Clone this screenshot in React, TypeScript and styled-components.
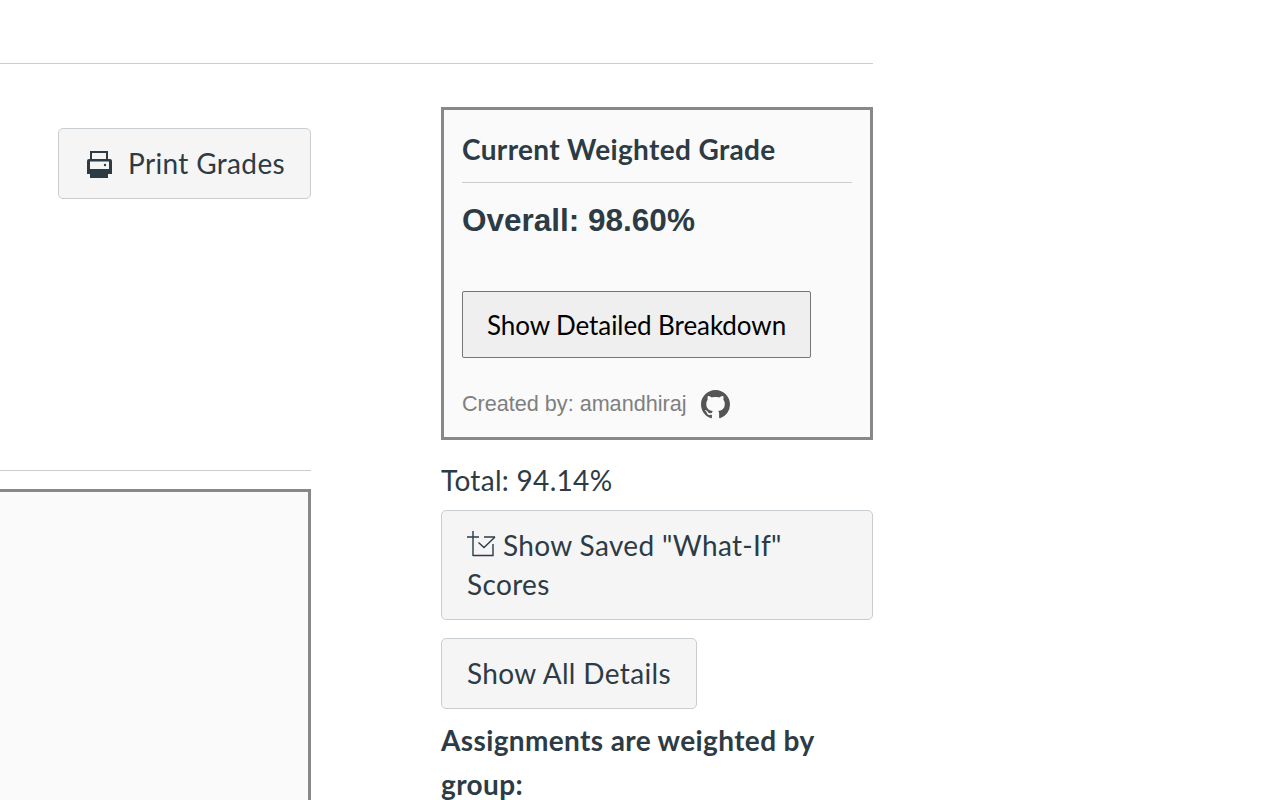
import React from 'react';
import styled, { createGlobalStyle } from 'styled-components';

const GlobalStyle = createGlobalStyle`
  html, body {
    margin: 0;
    padding: 0;
    height: 800px;
    overflow: hidden;
    background: #fff;
  }
  body {
    font-family: Lato, "Liberation Sans", sans-serif;
    color: #2d3b45;
  }
  * {
    box-sizing: border-box;
  }
`

const Page = styled.div`
  width: 873px;
`
const TopBar = styled.div`
  height: 64px;
  border-bottom: 1px solid #c7cdd1;
`
const Columns = styled.div`
  display: flex;
  gap: 130px;
`
const LeftColumn = styled.div`
  width: 311px;
  padding-top: 64px;
  display: flex;
  flex-direction: column;
  align-items: flex-end;
`
const RightColumn = styled.div`
  width: 432px;
  padding-top: 43px;
`
const Divider = styled.div`
  width: 100%;
  height: 1px;
  background: #c7cdd1;
  margin-top: 271px;
`
const EmptyPanel = styled.div`
  width: 100%;
  height: 400px;
  margin-top: 18px;
  background: #fafafa;
  border: 3px solid #888;
  border-left: none;
`
const CanvasButton = styled.div<{ $wide?: boolean }>`
  display: ${p => (p.$wide ? 'block' : 'inline-flex')};
  align-items: center;
  width: ${p => (p.$wide ? '100%' : 'auto')};
  padding: ${p => (p.$wide ? '15px 25px' : '0 25px')};
  min-height: 71px;
  background: #f5f5f5;
  border: 1px solid #c7cdd1;
  border-radius: 5px;
  font-size: 28px;
  line-height: 39px;
  letter-spacing: 0.35px;
  color: #2d3b45;
`
const PrintIcon = styled.svg`
  width: 28px;
  height: 28px;
  margin-right: 16px;
  flex-shrink: 0;
`
const WhatIfIcon = styled.svg`
  width: 30px;
  height: 28px;
  margin-right: 6px;
  vertical-align: -3px;
`
const GradeBox = styled.div`
  height: 333px;
  padding: 18px 18px 0;
  background: #fafafa;
  border: 3px solid #888;
`
const GradeTitle = styled.div`
  font-size: 28px;
  font-weight: 700;
  line-height: 42px;
  letter-spacing: 0.36px;
  padding-bottom: 12px;
  border-bottom: 1px solid #c7cdd1;
`
const OverallText = styled.div`
  margin-top: 16px;
  font-family: "Liberation Sans", Arial, sans-serif;
  font-size: 31.5px;
  font-weight: 700;
  line-height: 42px;
`
const BreakdownButton = styled.div`
  display: inline-flex;
  align-items: center;
  justify-content: center;
  margin-top: 50px;
  width: 349px;
  height: 67px;
  background: #efefef;
  border: 1px solid #767676;
  border-radius: 2px;
  font-size: 26px;
  letter-spacing: -0.08px;
  color: #000;
`
const CreditRow = styled.div`
  display: flex;
  align-items: center;
  margin-top: 30px;
  font-family: "Liberation Sans", Arial, sans-serif;
  font-size: 21.6px;
  color: #7f7f7f;
`
const GithubIcon = styled.svg`
  width: 29px;
  height: 29px;
  margin-left: 15px;
  margin-top: 2px;
  fill: #555;
`
const TotalText = styled.div`
  margin-top: 20px;
  margin-bottom: 10px;
  font-size: 28px;
  line-height: 40px;
  letter-spacing: 0.3px;
`
const DetailsSlot = styled.div`
  margin-top: 18px;
`
const WeightHeading = styled.div`
  margin-top: 9px;
  font-size: 28px;
  font-weight: 700;
  line-height: 44px;
  letter-spacing: 0.37px;
`

const App: React.FC = () => {
  return (
    <>
      <GlobalStyle />
      <Page>
        <TopBar />
        <Columns>
          <LeftColumn>
            <CanvasButton>
              <PrintIcon viewBox="0 0 28 28" fill="#2d3b45">
                <path fillRule="evenodd" d="M6 1h18v9h-2V3H8v7H6z" />
                <path fillRule="evenodd" d="M5 9h21a2 2 0 0 1 2 2v13H3V11a2 2 0 0 1 2-2zM6 11.5v7.5h19v-7.5z" />
                <rect x="6" y="20" width="18" height="8" />
                <circle cx="21" cy="15" r="1.2" />
              </PrintIcon>
              Print Grades
            </CanvasButton>
            <Divider />
            <EmptyPanel />
          </LeftColumn>
          <RightColumn>
            <GradeBox>
              <GradeTitle>Current Weighted Grade</GradeTitle>
              <OverallText>Overall: 98.60%</OverallText>
              <BreakdownButton>Show Detailed Breakdown</BreakdownButton>
              <CreditRow>
                Created by: amandhiraj
                <GithubIcon viewBox="0 0 16 16">
                  <path d="M8 0C3.58 0 0 3.58 0 8c0 3.54 2.29 6.53 5.47 7.59.4.07.55-.17.55-.38 0-.19-.01-.82-.01-1.49-2.01.37-2.53-.49-2.69-.94-.09-.23-.48-.94-.82-1.13-.28-.15-.68-.52-.01-.53.63-.01 1.08.58 1.23.82.72 1.21 1.87.87 2.33.66.07-.52.28-.87.51-1.07-1.78-.2-3.64-.89-3.64-3.95 0-.87.31-1.59.82-2.15-.08-.2-.36-1.02.08-2.12 0 0 .67-.21 2.2.82.64-.18 1.32-.27 2-.27s1.36.09 2 .27c1.53-1.04 2.2-.82 2.2-.82.44 1.1.16 1.92.08 2.12.51.56.82 1.27.82 2.15 0 3.07-1.87 3.75-3.65 3.95.29.25.54.73.54 1.48 0 1.07-.01 1.93-.01 2.2 0 .21.15.46.55.38A8.01 8.01 0 0 0 16 8c0-4.42-3.58-8-8-8z" />
                </GithubIcon>
              </CreditRow>
            </GradeBox>
            <TotalText>Total: 94.14%</TotalText>
            <CanvasButton $wide>
              <WhatIfIcon viewBox="0 0 30 28" fill="none" stroke="#2d3b45" strokeWidth="1.4">
                <path d="M0 6h12M6 0v25" />
                <path d="M6 24.5h20V13M17 6h11" />
                <path d="M11.5 11.5l5.5 5L28 6" />
              </WhatIfIcon>
              Show Saved "What-If" Scores
            </CanvasButton>
            <DetailsSlot>
              <CanvasButton>Show All Details</CanvasButton>
            </DetailsSlot>
            <WeightHeading>Assignments are weighted by group:</WeightHeading>
          </RightColumn>
        </Columns>
      </Page>
    </>
  )
}

export default App
